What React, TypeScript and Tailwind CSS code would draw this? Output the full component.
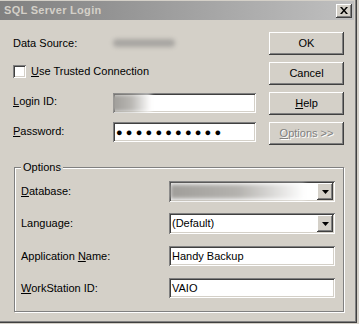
import React from "react";

const raised =
  "shadow-[inset_-1px_-1px_0_#404040,inset_1px_1px_0_#ffffff,inset_-2px_-2px_0_#808080,inset_2px_2px_0_#d4d0c8]";
const sunken =
  "shadow-[inset_1px_1px_0_#808080,inset_-1px_-1px_0_#ffffff,inset_2px_2px_0_#404040,inset_-2px_-2px_0_#d4d0c8]";

function U({ c }: { c: string }) {
  return <span className="underline underline-offset-[1px]">{c}</span>;
}

function Button({ children, disabled }: { children: React.ReactNode; disabled?: boolean }) {
  return (
    <div
      className={`w-[75px] h-[23px] bg-[#d4d0c8] flex items-center justify-center ${raised} ${
        disabled ? "text-[#808080] [text-shadow:1px_1px_0_#ffffff]" : "text-black"
      }`}
    >
      {children}
    </div>
  );
}

function Arrow() {
  return (
    <div className={`w-[16px] h-[17px] bg-[#d4d0c8] flex items-center justify-center ${raised}`}>
      <svg width="7" height="4" viewBox="0 0 7 4">
        <path d="M0 0h7L3.5 4z" fill="#000" />
      </svg>
    </div>
  );
}

export default function App() {
  return (
    <div
      className="w-[359px] h-[324px] bg-[#d4d0c8] text-[11px] text-black leading-none overflow-hidden"
      style={{ fontFamily: '"Liberation Sans", Arial, sans-serif' }}
    >
      <div className="w-[357px] h-[323px] border-r border-b border-r-[#404040] border-b-[#404040] flex flex-col">
        <div className="h-[323px] w-[356px] border-r border-b border-[#808080] flex flex-col">
          {/* Title bar */}
          <div className="mt-[1px] mr-[1px] h-[19px] flex items-center justify-between bg-gradient-to-r from-[#808080] to-[#c0c0c0] pl-[4px] pr-[2px]">
            <span className="font-bold text-[#d4d0c8] text-[11px] tracking-[0.3px]">SQL Server Login</span>
            <div className={`w-[16px] h-[14px] bg-[#d4d0c8] flex items-center justify-center ${raised}`}>
              <svg width="8" height="7" viewBox="0 0 8 7">
                <path d="M0 0h2l2 2.5L6 0h2L5 3.5 8 7H6L4 4.5 2 7H0l3-3.5z" fill="#000" />
              </svg>
            </div>
          </div>

          {/* Body */}
          <div className="flex flex-col pl-[13px]">
            <div className="flex">
              {/* Left fields */}
              <div className="w-[243px] flex flex-col pt-[12px]">
                <div className="h-[22px] flex items-center">
                  <span className="w-[100px]">Data Source:</span>
                  <div className="w-[62px] h-[8px] rounded-full bg-[#a8a6a2] blur-[2px]" />
                </div>
                <div className="h-[22px] mt-[6px] flex items-center">
                  <div className={`w-[13px] h-[13px] bg-white ${sunken}`} />
                  <span className="ml-[5px]">
                    <U c="U" />se Trusted Connection
                  </span>
                </div>
                <div className="h-[20px] mt-[11px] flex items-center">
                  <span className="w-[100px] -mt-[3px]">
                    <U c="L" />ogin ID:
                  </span>
                  <div className={`w-[143px] h-[20px] bg-white flex items-center overflow-hidden ${sunken}`}>
                    <div className="w-[40px] h-[18px] -ml-[2px] bg-gradient-to-r from-[#9c9a96] via-[#b8b6b2] to-[#ffffff] blur-[2px]" />
                  </div>
                </div>
                <div className="h-[20px] mt-[9px] flex items-center">
                  <span className="w-[100px] -mt-[2px]">
                    <U c="P" />assword:
                  </span>
                  <div className={`w-[143px] h-[20px] bg-white flex items-center pl-[3px] ${sunken}`}>
                    <span className="text-[11px] tracking-[3.2px] font-bold">●●●●●●●●●●●</span>
                  </div>
                </div>
              </div>
              {/* Buttons */}
              <div className="ml-[13px] pt-[12px] flex flex-col gap-[7px]">
                <Button>OK</Button>
                <Button>Cancel</Button>
                <Button>
                  <span>
                    <U c="H" />elp
                  </span>
                </Button>
                <Button disabled>
                  <span>
                    <U c="O" />ptions &gt;&gt;
                  </span>
                </Button>
              </div>
            </div>

            {/* Group box */}
            <div className="relative ml-[1px] mt-[22px] w-[330px] h-[145px] border border-[#808080] shadow-[1px_1px_0_#ffffff,inset_1px_1px_0_#ffffff]">
              <span className="absolute -top-[6px] left-[6px] bg-[#d4d0c8] px-[2px]">Options</span>
              <div className="flex flex-col pl-[6px] pt-[13px]">
                <div className="h-[21px] flex items-center">
                  <span className="w-[148px]">
                    <U c="D" />atabase:
                  </span>
                  <div className={`w-[166px] h-[21px] bg-white flex items-center justify-between pr-[2px] overflow-hidden ${sunken}`}>
                    <div className="w-[135px] h-[15px] ml-[1px] bg-gradient-to-r from-[#a09e9a] via-[#b4b2ae] to-[#ffffff] blur-[2px]" />
                    <Arrow />
                  </div>
                </div>
                <div className="h-[21px] mt-[11px] flex items-center">
                  <span className="w-[148px]">Language:</span>
                  <div className={`w-[166px] h-[21px] bg-white flex items-center justify-between pl-[3px] pr-[2px] ${sunken}`}>
                    <span>(Default)</span>
                    <Arrow />
                  </div>
                </div>
                <div className="h-[20px] mt-[12px] flex items-center">
                  <span className="w-[148px]">
                    Application <U c="N" />ame:
                  </span>
                  <div className={`w-[166px] h-[20px] bg-white flex items-center pl-[3px] ${sunken}`}>
                    <span>Handy Backup</span>
                  </div>
                </div>
                <div className="h-[20px] mt-[12px] flex items-center">
                  <span className="w-[148px]">
                    <U c="W" />orkStation ID:
                  </span>
                  <div className={`w-[166px] h-[20px] bg-white flex items-center pl-[3px] ${sunken}`}>
                    <span>VAIO</span>
                  </div>
                </div>
              </div>
            </div>
          </div>
        </div>
      </div>
    </div>
  );
}
